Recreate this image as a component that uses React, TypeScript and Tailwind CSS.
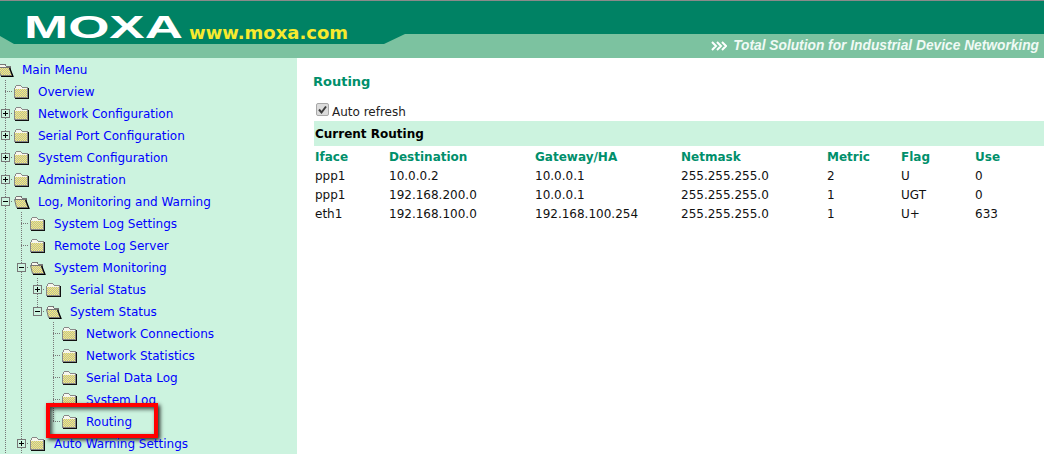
type TreeRow = {
  label: string;
  guides: boolean[];
  last?: boolean;
  box?: "plus" | "minus";
  open?: boolean;
  mark?: boolean;
};

const menu: TreeRow[] = [
  { label: "Main Menu", guides: [], open: true },
  { label: "Overview", guides: [] },
  { label: "Network Configuration", guides: [], box: "plus" },
  { label: "Serial Port Configuration", guides: [], box: "plus" },
  { label: "System Configuration", guides: [], box: "plus" },
  { label: "Administration", guides: [], box: "plus" },
  { label: "Log, Monitoring and Warning", guides: [], box: "minus", open: true },
  { label: "System Log Settings", guides: [true] },
  { label: "Remote Log Server", guides: [true] },
  { label: "System Monitoring", guides: [true], box: "minus", open: true },
  { label: "Serial Status", guides: [true, true], box: "plus" },
  { label: "System Status", guides: [true, true], box: "minus", open: true, last: true },
  { label: "Network Connections", guides: [true, true, false] },
  { label: "Network Statistics", guides: [true, true, false] },
  { label: "Serial Data Log", guides: [true, true, false] },
  { label: "System Log", guides: [true, true, false] },
  { label: "Routing", guides: [true, true, false], last: true, mark: true },
  { label: "Auto Warning Settings", guides: [true], box: "plus" },
];

const routes = [
  ["ppp1", "10.0.0.2", "10.0.0.1", "255.255.255.0", "2", "U", "0"],
  ["ppp1", "192.168.200.0", "10.0.0.1", "255.255.255.0", "1", "UGT", "0"],
  ["eth1", "192.168.100.0", "192.168.100.254", "255.255.255.0", "1", "U+", "633"],
];

const columns = ["Iface", "Destination", "Gateway/HA", "Netmask", "Metric", "Flag", "Use"];

function Guide({ on }: { on: boolean }) {
  return (
    <svg width="16" height="22" className="shrink-0">
      {on && <line x1="8.5" y1="0" x2="8.5" y2="22" stroke="#777" strokeDasharray="1 1" />}
    </svg>
  );
}

function Connector({ box, last }: { box?: "plus" | "minus"; last?: boolean }) {
  return (
    <svg width="16" height="22" className="shrink-0">
      <line x1="8.5" y1="0" x2="8.5" y2={last ? 11 : 22} stroke="#777" strokeDasharray="1 1" />
      <line x1="8" y1="11.5" x2="16" y2="11.5" stroke="#777" strokeDasharray="1 1" />
      {box && (
        <g>
          <rect x="4.5" y="7.5" width="8" height="8" fill="#ccf3df" stroke="#777" />
          <line x1="6" y1="11.5" x2="11" y2="11.5" stroke="#000" />
          {box === "plus" && <line x1="8.5" y1="9" x2="8.5" y2="14" stroke="#000" />}
        </g>
      )}
    </svg>
  );
}

function Folder({ open, id }: { open?: boolean; id: string }) {
  return (
    <svg width="17" height="22" className="shrink-0" shapeRendering="crispEdges">
      <defs>
        <pattern id={id} width="2" height="2" patternUnits="userSpaceOnUse">
          <rect width="2" height="2" fill="#fff66e" />
          <rect width="1" height="1" fill="#b4b4a8" />
          <rect x="1" y="1" width="1" height="1" fill="#b4b4a8" />
        </pattern>
      </defs>
      {open ? (
        <g>
          <path d="M2.5 9.5 V7.5 L4 6.5 H8 L9.5 8.5 H13.5 V11.5" fill="#f7f7ee" stroke="#777" />
          <path d="M1.5 9.5 H12 L15 17.5 H3.5 Z" fill={`url(#${id})`} stroke="#777" shapeRendering="auto" />
          <path d="M12.5 9.5 L16 18.5 H4" fill="none" stroke="#000" strokeWidth="1.2" shapeRendering="auto" />
        </g>
      ) : (
        <g>
          <path d="M1.5 8.5 L3.5 5.5 H7.5 L9.5 7.5 H14.5 V17.5 H1.5 Z" fill="#f7f7ee" stroke="#888" />
          <rect x="2" y="9" width="12" height="8" fill={`url(#${id})`} />
          <path d="M15.5 8 V18.5 H2" fill="none" stroke="#111" />
        </g>
      )}
    </svg>
  );
}

function Row({ row, index }: { row: TreeRow; index: number }) {
  const root = index === 0;
  return (
    <div className="relative flex h-[22px] items-center ml-[-3px]">
      {row.guides.map((on, i) => (
        <Guide key={i} on={on} />
      ))}
      {!root && <Connector box={row.box} last={row.last} />}
      <Folder open={row.open} id={`dither-${index}`} />
      <a href="#" className="ml-2 mt-[2px] whitespace-nowrap text-[#0000ff]">
        {row.label}
      </a>
      {row.mark && (
        <div className="absolute left-[49px] top-[-7px] h-[35px] w-[112px] border-[4px] border-[#ff0000] shadow-[2px_2px_4px_rgba(0,0,0,0.85),inset_2px_2px_4px_rgba(0,0,0,0.75)]" />
      )}
    </div>
  );
}

function Header() {
  return (
    <header className="relative flex h-[58px] shrink-0 items-start overflow-hidden bg-[#7cc2a0]">
      <svg width="1044" height="58" className="absolute inset-0">
        <rect width="1044" height="1" fill="#8a8a8a" />
        <polygon points="0,1 1044,1 1044,34 405,34 384,44 14,44 0,36" fill="#008264" />
      </svg>
      <div className="relative flex h-[44px] items-end pl-[24px]">
        <svg width="160" height="44" className="shrink-0">
          <text
            x="0"
            y="38"
            textLength="159"
            lengthAdjust="spacingAndGlyphs"
            fontFamily="'Liberation Sans', sans-serif"
            fontWeight="700"
            fontSize="31"
            fill="#ffffff"
          >
            MOXA
          </text>
        </svg>
        <span className="ml-[5px] font-['DejaVu_Sans',sans-serif] text-[18px] font-bold leading-[22px] text-[#f7ea2e]">
          www.moxa.com
        </span>
      </div>
      <div className="relative ml-auto mt-[39px] flex h-[14px] items-center pr-[5px] font-['Liberation_Sans',sans-serif] text-[13.75px] font-bold italic text-[#f0faf5]">
        <svg width="16" height="12" className="mr-[6px]" fill="none" stroke="#fff" strokeWidth="2">
          <path d="M1 2 L5 6 L1 10 M6 2 L10 6 L6 10 M11 2 L15 6 L11 10" />
        </svg>
        Total Solution for Industrial Device Networking
      </div>
    </header>
  );
}

export default function App() {
  return (
    <div className="flex h-screen w-full flex-col overflow-hidden bg-white font-['DejaVu_Sans',sans-serif] text-[12px]">
      <Header />
      <div className="flex min-h-0 flex-1">
        <aside className="w-[297px] shrink-0 overflow-hidden bg-[#ccf3df]">
          {menu.map((row, i) => (
            <Row key={row.label} row={row} index={i} />
          ))}
        </aside>
        <main className="min-w-0 flex-1 pl-[17px]">
          <h1 className="ml-[-1px] pt-[16px] text-[13px] font-bold leading-[16px] text-[#008f6b]">Routing</h1>
          <label className="mt-[13px] flex h-[18px] items-center pl-[2px] text-[#222]">
            <span className="relative mt-[-5px] flex size-[13px] shrink-0">
              <input
                type="checkbox"
                checked
                disabled
                readOnly
                className="m-0 size-[13px] appearance-none rounded-[2px] border border-[#a8a8a8] bg-[#dcdcdc]"
              />
              <svg width="13" height="13" className="absolute inset-0" fill="none" stroke="#3c3c3c" strokeWidth="2">
                <path d="M3 6.5 L5.5 9.5 L10 3.5" />
              </svg>
            </span>
            <span className="ml-[3px]">Auto refresh</span>
          </label>
          <div className="flex h-[25px] items-center bg-[#ccf3df] pl-[1px] font-bold text-black">
            Current Routing
          </div>
          <div className="grid grid-cols-[74px_146px_146px_146px_74px_74px_1fr] pl-[1px]">
            {columns.map((c) => (
              <div key={c} className="flex h-[20px] items-center pt-[2px] font-bold text-[#008f6b]">
                {c}
              </div>
            ))}
            {routes.flatMap((r, i) =>
              r.map((v, j) => (
                <div key={`${i}-${j}`} className="flex h-[19px] items-center text-[#111]">
                  {v}
                </div>
              ))
            )}
          </div>
        </main>
      </div>
    </div>
  );
}
